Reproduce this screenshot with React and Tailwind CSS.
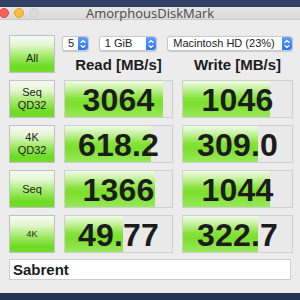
import React from "react";

const F = { fontFamily: '"Liberation Sans", Arial, sans-serif' };

function Stepper() {
  return (
    <div className="flex h-full w-[10px] shrink-0 items-center justify-center rounded-r-[3px] bg-gradient-to-b from-[#5fa2fb] to-[#2f72ef]">
      <svg width="6" height="10" viewBox="0 0 6 10" fill="none" stroke="white" strokeWidth="1.1" strokeLinecap="round" strokeLinejoin="round">
        <path d="M1 3.5 L3 1.5 L5 3.5" />
        <path d="M1 6.5 L3 8.5 L5 6.5" />
      </svg>
    </div>
  );
}

function Select({ w, label }) {
  return (
    <div className={`flex h-[15px] ${w} items-stretch rounded-[3px] border border-[#c9c9c9] bg-white shadow-[0_0.5px_1px_rgba(0,0,0,0.15)]`}>
      <div className="flex min-w-0 flex-1 items-center whitespace-nowrap pl-[5px] text-[11px] leading-none text-[#222]">{label}</div>
      <Stepper />
    </div>
  );
}

function Label({ children, small }) {
  return (
    <div className={`flex h-[38px] flex-col items-center justify-center border border-[#c2c2c2] bg-[linear-gradient(to_bottom,#f7f9f4_0%,#e4f6d4_25%,#a6ea6c_55%,#6ddb24_85%,#72de2a_100%)] ${small ? "text-[9px]" : "text-[11px]"} leading-[13px] text-[#222]`}>
      {children}
    </div>
  );
}

function Value({ v, fill }) {
  return (
    <div className="relative h-[38px] border border-[#cfcfcf] bg-[#e9e9e9]">
      <div
        className="absolute left-0 top-0 h-full bg-[linear-gradient(to_bottom,#f1fbe9_0%,#c4f29c_22%,#86e23a_48%,#7cdf2c_62%,#98e95a_100%)]"
        style={{ width: fill }}
      />
      <div className="relative flex h-full items-center justify-center pt-[1px] text-[32px] font-bold leading-none tracking-[0.2px] text-[#1c1c1c]">
        {v}
      </div>
    </div>
  );
}

const rows = [
  { l: ["Seq", "QD32"], r: "3064", rf: 98, w: "1046", wf: 87 },
  { l: ["4K", "QD32"], r: "618.2", rf: 86, w: "309.0", wf: 75 },
  { l: ["Seq"], r: "1366", rf: 90, w: "1044", wf: 87 },
  { l: ["4K"], r: "49.77", rf: 58, w: "322.7", wf: 75, small: true },
];

export default function App() {
  return (
    <div className="h-[300px] w-[300px] overflow-hidden bg-[#24344f]" style={F}>
      <div className="h-[7px] bg-[#2f4263]" />
      <div className="flex h-[286px] flex-col bg-[#ececec]">
        <div className="relative flex h-[13px] items-center justify-center border-b border-[#c8c8c8] bg-gradient-to-b from-[#e6e6e6] to-[#dadada]">
          <div className="absolute left-[-1px] top-[1px] flex gap-[5px]">
            <div className="h-[10px] w-[10px] rounded-full border border-[#e0443e] bg-[#fc605c]" />
            <div className="h-[10px] w-[10px] rounded-full border border-[#dea123] bg-[#fdbc40]" />
            <div className="h-[10px] w-[10px] rounded-full border border-[#cfcfcf] bg-[#dcdcdc]" />
          </div>
          <div className="text-[13px] leading-none text-[#4a4a4a]" style={{ fontFamily: '"Open Sans", "Liberation Sans", sans-serif' }}>
            AmorphousDiskMark
          </div>
        </div>
        <div className="grid grid-cols-[46px_109px_111px] gap-x-[9px] gap-y-[7px] px-[9px] pt-[15px]">
          <div className="flex h-[38px] flex-col items-center justify-end border border-[#c2c2c2] bg-[linear-gradient(to_bottom,#f7f9f4_0%,#e4f6d4_25%,#a6ea6c_55%,#6ddb24_85%,#72de2a_100%)] pb-[8px] text-[11px] leading-none text-[#222]">
            All
          </div>
          <div className="col-span-2 flex h-[38px] flex-col">
            <div className="ml-[-2px] mt-[1px] flex gap-[10px]">
              <Select w="w-[27px]" label="5" />
              <Select w="w-[59px]" label="1 GiB" />
              <Select w="w-[127px]" label="Macintosh HD (23%)" />
            </div>
            <div className="mt-[5px] grid grid-cols-[109px_111px] gap-x-[9px] text-center text-[15px] font-bold leading-[18px] text-[#1c1c1c]">
              <div>Read [MB/s]</div>
              <div>Write [MB/s]</div>
            </div>
          </div>
          {rows.map((r, i) => (
            <React.Fragment key={i}>
              <Label small={r.small}>
                {r.l.map((t) => (
                  <div key={t}>{t}</div>
                ))}
              </Label>
              <Value v={r.r} fill={r.rf} />
              <Value v={r.w} fill={r.wf} />
            </React.Fragment>
          ))}
        </div>
        <div className="mx-[9px] mt-[6px] flex h-[21px] items-center border border-[#cdcdcd] bg-white px-[3px] text-[15px] font-bold leading-none text-[#1c1c1c]">
          Sabrent
        </div>
      </div>
    </div>
  );
}
